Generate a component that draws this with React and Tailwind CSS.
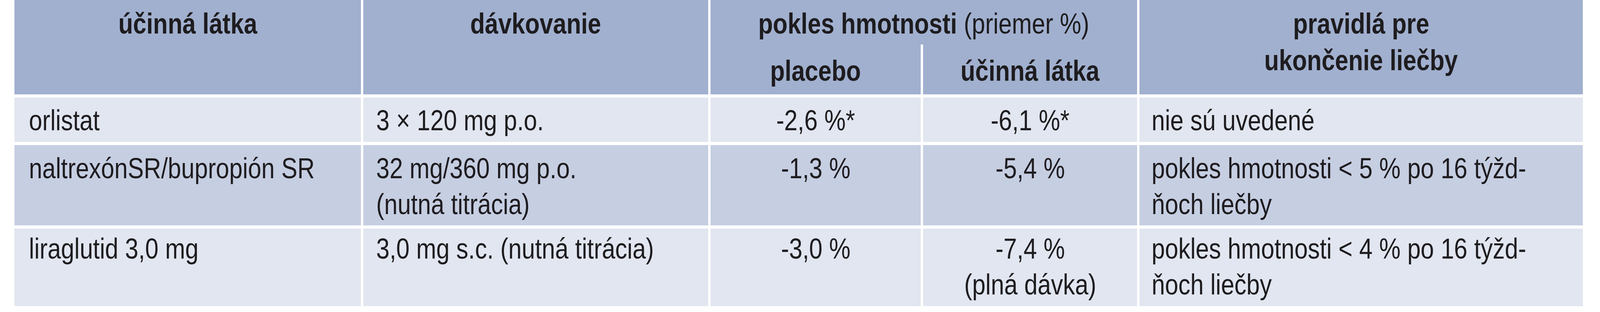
const font = { fontFamily: '"Liberation Sans", Arial, sans-serif' };

const rows = [
  {
    bg: "bg-[#e1e6f0]",
    pad: "pt-[12px] pb-[10px]",
    cells: [
      ["orlistat"],
      ["3 × 120 mg p.o."],
      ["-2,6 %*"],
      ["-6,1 %*"],
      ["nie sú uvedené"],
    ],
  },
  {
    bg: "bg-[#c6cee2]",
    pad: "pt-[13px] pb-[9px]",
    cells: [
      ["naltrexónSR/bupropión SR"],
      ["32 mg/360 mg p.o.", "(nutná titrácia)"],
      ["-1,3 %"],
      ["-5,4 %"],
      ["pokles hmotnosti < 5 % po 16 týžd-", "ňoch liečby"],
    ],
  },
  {
    bg: "bg-[#e1e6f0]",
    pad: "pt-[5px] pb-[10px]",
    cells: [
      ["liraglutid 3,0 mg"],
      ["3,0 mg s.c. (nutná titrácia)"],
      ["-3,0 %"],
      ["-7,4 %", "(plná dávka)"],
      ["pokles hmotnosti < 4 % po 16 týžd-", "ňoch liečby"],
    ],
  },
];

// per-column padding / alignment
const cellPad = [
  "pl-[37px] pr-[16px] text-left",
  "pl-[33px] pr-[16px] text-left",
  "px-[8px] text-center",
  "px-[8px] text-center",
  "pl-[31px] pr-[16px] text-left",
];

// the print face is a condensed one, so squeeze the line a bit
function Narrow({ children, center }) {
  return (
    <span className={`inline-block whitespace-nowrap scale-x-[0.82] ${center ? "origin-center" : "origin-left"}`}>
      {children}
    </span>
  );
}

function Lines({ lines, center }) {
  return lines.map((l, i) => (
    <div key={i} className="whitespace-nowrap">
      <Narrow center={center}>{l}</Narrow>
    </div>
  ));
}

export default function App() {
  return (
    <div className="w-full h-[800px] bg-white pl-[37px] pr-[44px] text-[#1e1c1f]" style={font}>
      <div className="grid grid-cols-[887px_883px_538px_548px_1135px] gap-x-[6px] gap-y-[8px] text-[75px] leading-[92px]">
        {/* header */}
        <div className="bg-[#a1b0cf] pt-[13px] text-center font-bold leading-[94px]">
          <Narrow center>účinná látka</Narrow>
        </div>
        <div className="bg-[#a1b0cf] pt-[13px] text-center font-bold leading-[94px]">
          <Narrow center>dávkovanie</Narrow>
        </div>
        <div className="col-span-2 flex flex-col leading-[94px]">
          <div className="bg-[#a1b0cf] pt-[13px] pb-[7px] text-center whitespace-nowrap">
            <Narrow center>
              <span className="font-bold">pokles hmotnosti </span>
              <span className="font-normal">(priemer %)</span>
            </Narrow>
          </div>
          <div className="grid grid-cols-[538px_548px] gap-x-[6px]">
            <div className="bg-[#a1b0cf] pt-[20px] pb-[14px] text-center font-bold">
              <Narrow center>placebo</Narrow>
            </div>
            <div className="bg-[#a1b0cf] pt-[20px] pb-[14px] text-center font-bold">
              <Narrow center>účinná látka</Narrow>
            </div>
          </div>
        </div>
        <div className="bg-[#a1b0cf] pt-[13px] text-center font-bold leading-[94px]">
          <Lines lines={["pravidlá pre", "ukončenie liečby"]} center />
        </div>

        {/* body */}
        {rows.map((r, ri) =>
          r.cells.map((c, ci) => (
            <div key={ri + "-" + ci} className={`${r.bg} ${r.pad} ${cellPad[ci]}`}>
              <Lines lines={c} center={ci === 2 || ci === 3} />
            </div>
          ))
        )}
      </div>
    </div>
  );
}
